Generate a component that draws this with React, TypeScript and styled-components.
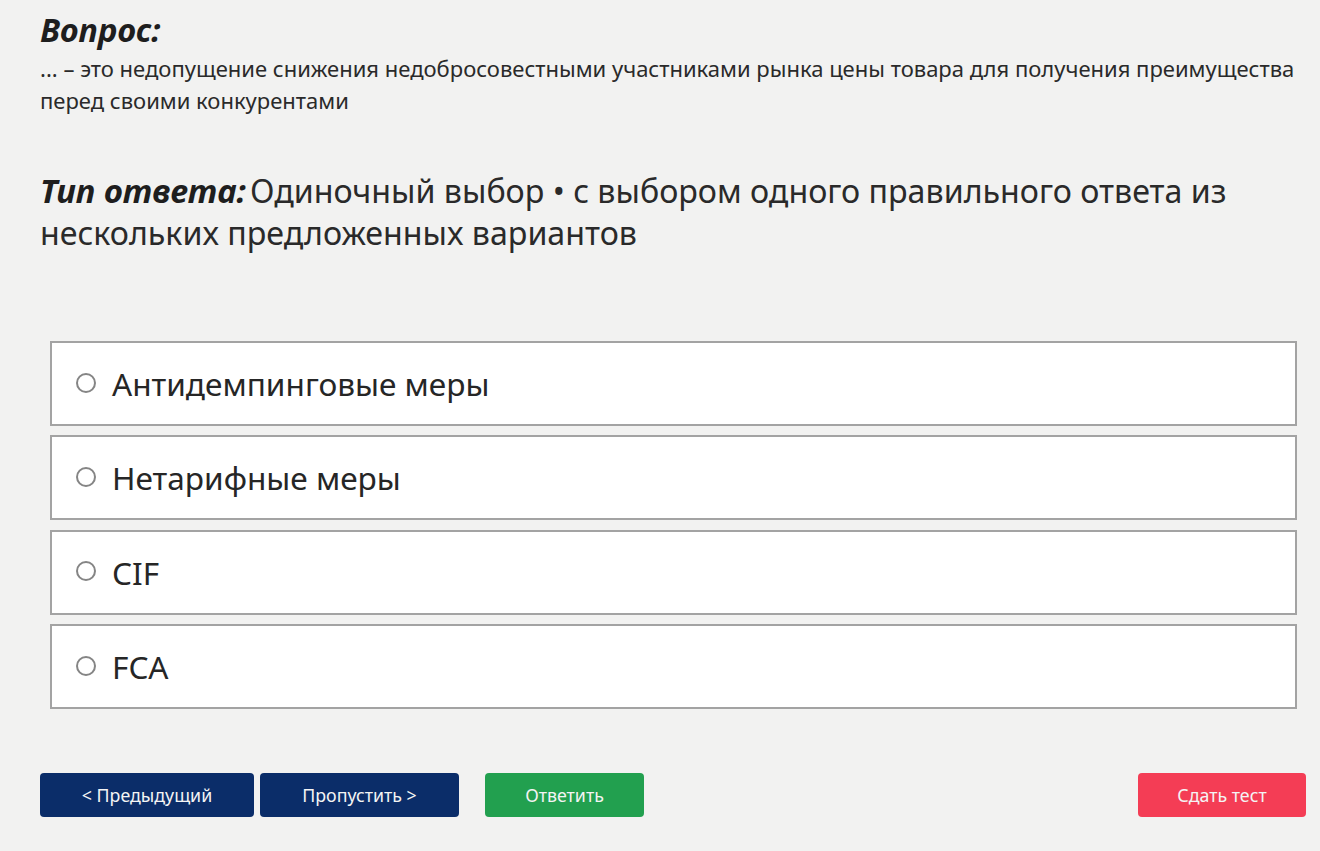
import styled, { createGlobalStyle } from "styled-components";
import { useState } from "react";

const GlobalStyle = createGlobalStyle`
  body {
    margin: 0;
    background: #f2f2f1;
    font-family: "Noto Sans", "Open Sans", sans-serif;
    color: #222;
  }
`;

const Page = styled.div`
  padding: 8px 14px 0 40px;
`;

const Heading = styled.h2`
  margin: 0;
  font-size: 32.5px;
  font-weight: 700;
  font-style: italic;
  line-height: 44px;
  color: #1e1e1e;
`;

const QuestionText = styled.p`
  margin: 0;
  font-size: 22px;
  line-height: 32px;
  color: #2a2a2a;
`;

const AnswerType = styled.p`
  margin: 54px 0 0;
  font-size: 32.2px;
  line-height: 42px;
  color: #2a2a2a;
`;

const TypeLabel = styled.b`
  display: inline-block;
  padding-right: 4px;
  font-style: italic;
  font-weight: 700;
  font-size: 33px;
  color: #1e1e1e;
`;

const Options = styled.div`
  display: flex;
  flex-direction: column;
  gap: 9.4px;
  margin: 87px 9px 0 10px;
`;

const Option = styled.label<{ $checked: boolean }>`
  display: flex;
  align-items: center;
  gap: 16px;
  height: 85px;
  flex-shrink: 0;
  box-sizing: border-box;
  padding: 0 24px;
  background: #fff;
  border: 2px solid #a3a3a3;
  cursor: pointer;
  font-size: 31.6px;
  color: #262626;
  ${(p) => p.$checked && "border-color: #0b2d69;"}
`;

const Radio = styled.span<{ $checked: boolean }>`
  width: 16px;
  height: 16px;
  border: 2px solid #858585;
  border-radius: 50%;
  flex-shrink: 0;
  box-sizing: content-box;
  margin-bottom: 2px;
  background: ${(p) => (p.$checked ? "radial-gradient(#0b2d69 45%, #fff 50%)" : "#fff")};
`;

const Footer = styled.div`
  display: flex;
  align-items: center;
  margin-top: 64px;
`;

const Button = styled.button<{ $color: string; $width: number }>`
  height: 44px;
  width: ${(p) => p.$width}px;
  border: none;
  border-radius: 4px;
  background: ${(p) => p.$color};
  color: #f4f4f4;
  font-family: "Noto Sans", "Open Sans", sans-serif;
  font-size: 17.8px;
  cursor: pointer;
`;

const Gap = styled.div<{ $w?: number }>`
  width: ${(p) => p.$w ?? 0}px;
  flex: ${(p) => (p.$w ? "none" : 1)};
`;

const answers = ["Антидемпинговые меры", "Нетарифные меры", "CIF", "FCA"];

export default function App() {
  const [selected, setSelected] = useState<number | null>(null);
  return (
    <Page>
      <GlobalStyle />
      <Heading>Вопрос:</Heading>
      <QuestionText>
        ... – это недопущение снижения недобросовестными участниками рынка цены товара для получения преимущества
        перед своими конкурентами
      </QuestionText>
      <AnswerType>
        <TypeLabel>Тип ответа:</TypeLabel>Одиночный выбор • с выбором одного правильного ответа из нескольких
        предложенных вариантов
      </AnswerType>
      <Options>
        {answers.map((a, i) => (
          <Option key={a} $checked={selected === i} onClick={() => setSelected(i)}>
            <Radio $checked={selected === i} />
            {a}
          </Option>
        ))}
      </Options>
      <Footer>
        <Button $color="#0b2d69" $width={214}>&lt; Предыдущий</Button>
        <Gap $w={6} />
        <Button $color="#0b2d69" $width={199}>Пропустить &gt;</Button>
        <Gap $w={26} />
        <Button $color="#22a04f" $width={159}>Ответить</Button>
        <Gap />
        <Button $color="#f43d55" $width={168}>Сдать тест</Button>
      </Footer>
    </Page>
  );
}
